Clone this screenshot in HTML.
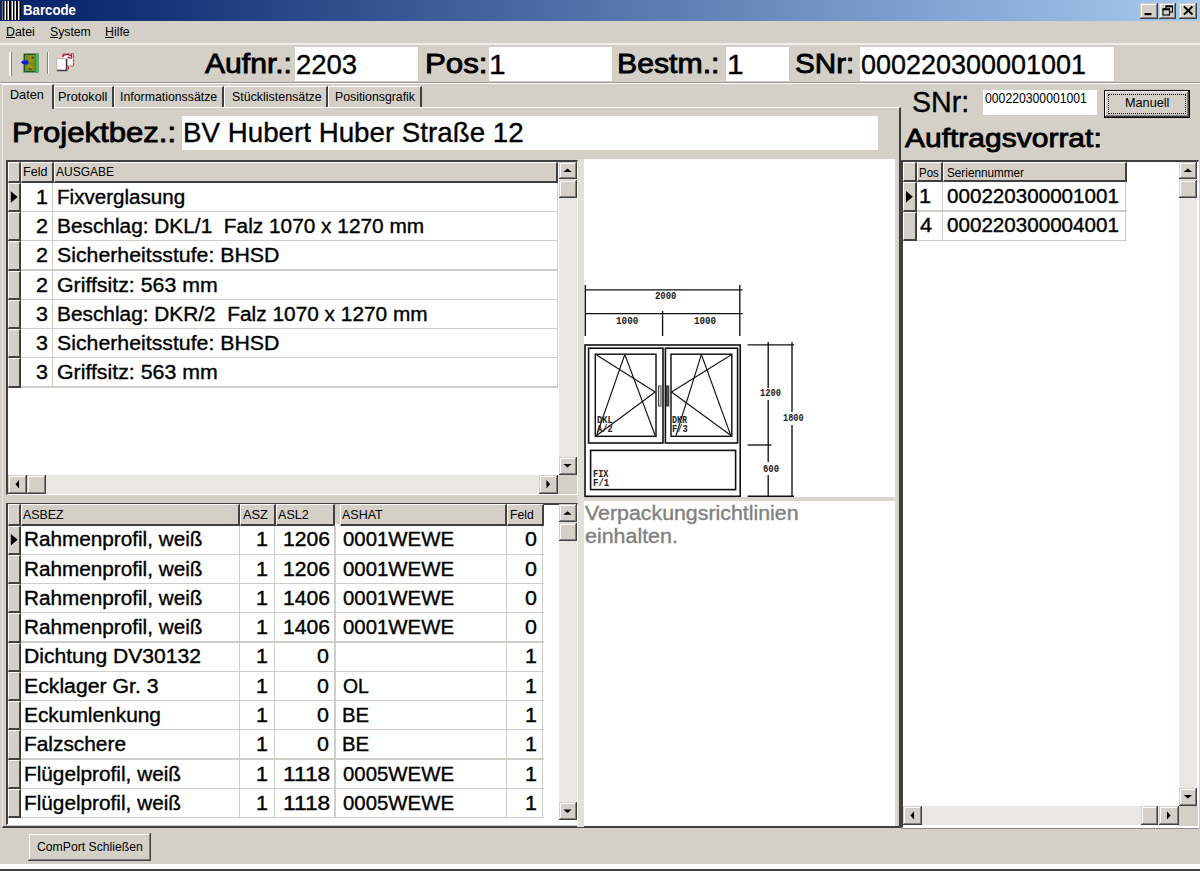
<!DOCTYPE html>
<html><head><meta charset="utf-8"><title>Barcode</title>
<style>
html,body{margin:0;padding:0;}
body{width:1200px;height:871px;overflow:hidden;background:#d4d0c8;position:relative;font-family:"Liberation Sans",sans-serif;color:#000;}
div{position:absolute;box-sizing:border-box;}
svg{position:absolute;overflow:visible;}
.t{position:absolute;white-space:nowrap;line-height:1;transform-origin:0 0;display:block;}
.w{background:#fff;}
.rs{background:#d4d0c8;box-shadow:inset -1px -1px #404040,inset 1px 1px #d4d0c8,inset -2px -2px #808080,inset 2px 2px #fff;}
.tr{background:#e9e7e2;}
.hd{background:#d4d0c8;border-right:2px solid #404040;border-bottom:2px solid #404040;border-top:1px solid #fff;border-left:1px solid #fff;}
.gl{background:#cfcdc8;}
</style></head><body>
<div style="left:0px;top:0px;width:1200px;height:20.5px;background:linear-gradient(90deg,#0a246a 0%,#0c276e 6%,#a6caf0 100%);"></div><svg style="left:2px;top:1px" width="19" height="19" viewBox="0 0 19 19"><rect x="0" y="0" width="19" height="19" fill="#fff"/><rect x="0.5" y="0" width="2" height="19" fill="#000"/><rect x="4" y="0" width="1.5" height="19" fill="#000"/><rect x="7" y="0" width="2.5" height="19" fill="#000"/><rect x="11" y="0" width="1.5" height="19" fill="#000"/><rect x="14" y="0" width="2" height="19" fill="#000"/><rect x="17.5" y="0" width="1.5" height="19" fill="#000"/></svg><span class="t" style="left:23.00px;top:3.52px;font-size:13.8px;transform:scaleX(0.9598);font-weight:bold;color:#fff;">Barcode</span><div class="rs" style="left:1140px;top:2.5px;width:17.5px;height:16px;"></div><div class="rs" style="left:1158.5px;top:2.5px;width:17.5px;height:16px;"></div><div class="rs" style="left:1179px;top:2.5px;width:18px;height:16px;"></div><svg style="left:1140px;top:3px" width="58" height="15" viewBox="0 0 58 15"><rect x="4.5" y="10" width="7" height="2.2" fill="#000"/><rect x="26" y="3" width="6.5" height="6" fill="none" stroke="#000" stroke-width="1.1"/><rect x="25.5" y="2.5" width="7.5" height="1.8" fill="#000"/><rect x="23" y="6" width="6.5" height="6" fill="#d4d0c8" stroke="#000" stroke-width="1.1"/><rect x="22.5" y="5.5" width="7.5" height="1.8" fill="#000"/><path d="M44 3.5 L52.5 11.5 M52.5 3.5 L44 11.5" stroke="#000" stroke-width="1.9" fill="none"/></svg><span class="t" style="left:6.05px;top:25.40px;font-size:13px;transform:scaleX(0.9504);"><u>D</u>atei</span><span class="t" style="left:50.00px;top:25.40px;font-size:13px;transform:scaleX(0.9409);"><u>S</u>ystem</span><span class="t" style="left:104.55px;top:25.40px;font-size:13px;transform:scaleX(0.9485);"><u>H</u>ilfe</span><div style="left:0px;top:43.2px;width:1200px;height:1.8px;background:#efede9;"></div><div style="left:9px;top:52px;width:2.5px;height:24px;background:#fff;border-right:1px solid #808080;"></div><div style="left:46.7px;top:52px;width:2px;height:22px;background:#808080;border-right:1px solid #fff;"></div><svg style="left:20.5px;top:52.5px" width="19" height="20" viewBox="0 0 19 20"><rect x="2.5" y="0.5" width="15" height="19" fill="#1f5a1c"/><rect x="4" y="2" width="10" height="16" fill="#7e8a1e"/><rect x="14.5" y="1" width="2.6" height="18" fill="#35c455"/><path d="M9 3 l3 1 -1 4 -3 2z M6 12 l4 -1 2 4 -5 2z" fill="#9a9420"/><path d="M10.5 5.5 l2 -1.5 M7.5 15.5 l3 1" stroke="#1a3a12" stroke-width="1.2"/><path d="M0 9.2 q2 -2.6 4.5 -1.5 l1.2 -1.2 2.3 3.2 -2.8 2.6 -.9 -1.2 q-2.6 .9 -4.3 -1.9z" fill="#1616d8"/></svg><svg style="left:56px;top:52.5px" width="19" height="19" viewBox="0 0 19 19"><rect x="7" y="1" width="10.5" height="12" fill="#fdf6f6" stroke="#b83a4c" stroke-width="1.2" stroke-dasharray="3 .8"/><path d="M6.5 3.2 q3.5 -3.4 7.8 -.6 l1.2 -1 .2 3.6 -3.6 -.4 1.1 -1" fill="none" stroke="#b01830" stroke-width="1.2"/><rect x="0.8" y="5.8" width="9.4" height="11.6" fill="#fff" stroke="#b8b4ac" stroke-width=".9"/><path d="M1 17.6 h9.6 v-11.5" fill="none" stroke="#3c3c3c" stroke-width="1.5"/><path d="M12.5 14 v2.5" stroke="#b01830" stroke-width="1"/></svg><span class="t" style="left:204.50px;top:51.34px;font-size:27px;transform:scaleX(1.1144);-webkit-text-stroke:0.85px;">Aufnr.:</span><div class="w" style="left:295px;top:47px;width:123px;height:34px;"></div><span class="t" style="left:295.99px;top:51.28px;font-size:27.2px;transform:scaleX(1.0109);-webkit-text-stroke:0.35px;">2203</span><span class="t" style="left:424.68px;top:51.34px;font-size:27px;transform:scaleX(1.1578);-webkit-text-stroke:0.85px;">Pos:</span><div class="w" style="left:488.5px;top:47px;width:123px;height:34px;"></div><span class="t" style="left:489.30px;top:51.28px;font-size:27.2px;transform:scaleX(1.1000);-webkit-text-stroke:0.35px;">1</span><span class="t" style="left:616.76px;top:51.34px;font-size:27px;transform:scaleX(1.1191);-webkit-text-stroke:0.85px;">Bestm.:</span><div class="w" style="left:726px;top:47px;width:62.5px;height:34px;"></div><span class="t" style="left:727.30px;top:51.28px;font-size:27.2px;transform:scaleX(1.1000);-webkit-text-stroke:0.35px;">1</span><span class="t" style="left:794.90px;top:51.34px;font-size:27px;transform:scaleX(1.0971);-webkit-text-stroke:0.85px;">SNr:</span><div class="w" style="left:860px;top:47px;width:254px;height:34px;"></div><span class="t" style="left:861.01px;top:51.28px;font-size:27.2px;transform:scaleX(0.9925);-webkit-text-stroke:0.35px;">000220300001001</span><div style="left:0px;top:82px;width:1200px;height:1px;background:#9a968e;"></div><div style="left:0px;top:83px;width:1200px;height:1px;background:#fff;"></div><span class="t" style="left:911.81px;top:87.95px;font-size:29px;transform:scaleX(0.9865);-webkit-text-stroke:0.35px;">SNr:</span><div class="w" style="left:983px;top:89.5px;width:113.5px;height:25px;"></div><span class="t" style="left:984.50px;top:90.78px;font-size:14.2px;transform:scaleX(0.8610);">000220300001001</span><div style="left:1103.5px;top:89.5px;width:86.5px;height:28.5px;background:#d4d0c8;border:1px solid #000;box-shadow:inset -1px -1px #404040,inset 1px 1px #fff,inset -2px -2px #808080;"></div><div style="left:1108px;top:94px;width:77.5px;height:19.5px;border:1px dotted #000;"></div><span class="t" style="left:1124.53px;top:96.20px;font-size:13px;transform:scaleX(0.9745);">Manuell</span><span class="t" style="left:904.50px;top:124.70px;font-size:26.7px;transform:scaleX(1.1240);-webkit-text-stroke:0.85px;">Auftragsvorrat:</span><div style="left:2px;top:107px;width:898.5px;height:721px;background:#d4d0c8;border-left:1px solid #eceae5;border-top:1px solid #fff;border-right:2px solid #404040;border-bottom:2px solid #404040;"></div><div style="left:53.5px;top:86px;width:60px;height:21px;background:#d4d0c8;border-top:1px solid #fff;border-left:1px solid #fff;border-right:2px solid #404040;"></div><span class="t" style="left:58.02px;top:90.30px;font-size:13px;transform:scaleX(0.9761);">Protokoll</span><div style="left:113.5px;top:86px;width:110px;height:21px;background:#d4d0c8;border-top:1px solid #fff;border-left:1px solid #fff;border-right:2px solid #404040;"></div><span class="t" style="left:120.05px;top:90.30px;font-size:13px;transform:scaleX(0.9470);">Informationssätze</span><div style="left:223.5px;top:86px;width:104.5px;height:21px;background:#d4d0c8;border-top:1px solid #fff;border-left:1px solid #fff;border-right:2px solid #404040;"></div><span class="t" style="left:231.50px;top:90.30px;font-size:13px;transform:scaleX(0.9551);">Stücklistensätze</span><div style="left:328px;top:86px;width:93.5px;height:21px;background:#d4d0c8;border-top:1px solid #fff;border-left:1px solid #fff;border-right:2px solid #404040;"></div><span class="t" style="left:334.55px;top:90.30px;font-size:13px;transform:scaleX(0.9460);">Positionsgrafik</span><div style="left:2px;top:84px;width:52px;height:24.5px;background:#d4d0c8;border-top:1px solid #fff;border-left:1px solid #eceae5;border-right:2px solid #404040;"></div><span class="t" style="left:9.83px;top:88.00px;font-size:13px;transform:scaleX(0.9713);">Daten</span><span class="t" style="left:11.73px;top:119.11px;font-size:27.4px;transform:scaleX(1.1346);-webkit-text-stroke:0.85px;">Projektbez.:</span><div class="w" style="left:182.2px;top:115.5px;width:695.8px;height:34px;"></div><span class="t" style="left:183.19px;top:119.34px;font-size:27.6px;transform:scaleX(1.0050);-webkit-text-stroke:0.35px;">BV Hubert Huber Straße 12</span><div style="left:577px;top:159px;width:7px;height:668px;background:#e2e0db;"></div><div class="w" style="left:584px;top:159px;width:311px;height:338px;"></div><div style="left:584px;top:497px;width:312.5px;height:4px;background:#d9d6d0;"></div><div class="w" style="left:584px;top:501px;width:312.5px;height:325px;"></div><div style="left:895px;top:159px;width:1.5px;height:667px;background:#dedbd6;"></div><span class="t" style="left:584.70px;top:504.41px;font-size:19.6px;transform:scaleX(1.0894);color:#808080;-webkit-text-stroke:0.35px;">Verpackungsrichtlinien</span><span class="t" style="left:584.70px;top:527.41px;font-size:19.6px;transform:scaleX(1.0930);color:#808080;-webkit-text-stroke:0.35px;">einhalten.</span><div class="rs" style="left:27.5px;top:833px;width:123px;height:27.5px;"></div><span class="t" style="left:37.00px;top:840.00px;font-size:13px;transform:scaleX(0.9380);">ComPort Schließen</span><div style="left:0px;top:864px;width:1200px;height:4.5px;background:#fff;"></div><div style="left:0px;top:868.5px;width:1200px;height:2.5px;background:#404040;"></div><div style="left:5.5px;top:160px;width:572px;height:334.5px;background:#fff;border-left:2px solid #404040;border-top:2px solid #404040;border-right:1px solid #fff;border-bottom:1px solid #fff;"></div><div class="hd" style="left:7.5px;top:161.5px;width:13px;height:21.3px;"></div><div class="hd" style="left:20.5px;top:161.5px;width:33px;height:21.3px;"></div><span class="t" style="left:22.84px;top:165.20px;font-size:13px;transform:scaleX(0.9643);">Feld</span><div class="hd" style="left:53.5px;top:161.5px;width:504.5px;height:21.3px;"></div><span class="t" style="left:56.30px;top:165.20px;font-size:13px;transform:scaleX(0.9243);">AUSGABE</span><div class="hd" style="left:7.5px;top:182.8px;width:13px;height:29.25px;"></div><div class="gl" style="left:20.5px;top:210.85px;width:537.5px;height:1.2px;"></div><div class="hd" style="left:7.5px;top:212.05px;width:13px;height:29.25px;"></div><div class="gl" style="left:20.5px;top:240.1px;width:537.5px;height:1.2px;"></div><div class="hd" style="left:7.5px;top:241.3px;width:13px;height:29.25px;"></div><div class="gl" style="left:20.5px;top:269.35px;width:537.5px;height:1.2px;"></div><div class="hd" style="left:7.5px;top:270.55px;width:13px;height:29.25px;"></div><div class="gl" style="left:20.5px;top:298.6px;width:537.5px;height:1.2px;"></div><div class="hd" style="left:7.5px;top:299.8px;width:13px;height:29.25px;"></div><div class="gl" style="left:20.5px;top:327.85px;width:537.5px;height:1.2px;"></div><div class="hd" style="left:7.5px;top:329.05px;width:13px;height:29.25px;"></div><div class="gl" style="left:20.5px;top:357.1px;width:537.5px;height:1.2px;"></div><div class="hd" style="left:7.5px;top:358.3px;width:13px;height:29.25px;"></div><div class="gl" style="left:20.5px;top:386.35px;width:537.5px;height:1.2px;"></div><div class="gl" style="left:52.3px;top:182.8px;width:1.2px;height:204.75px;"></div><div class="gl" style="left:556.8px;top:182.8px;width:1.2px;height:204.75px;"></div><svg style="left:0;top:0" width="1" height="1"><polygon points="10.8,191.125 10.8,202.72500000000002 17.6,196.925" fill="#000"/></svg><div class="tr" style="left:558.5px;top:161.5px;width:18px;height:313px;"></div><div class="rs" style="left:558.5px;top:161.5px;width:18px;height:17.5px;"></div><svg style="left:0;top:0" width="1" height="1"><polygon points="563.36,172.05 571.64,172.05 567.5,168.45" fill="#000"/></svg><div class="rs" style="left:558.5px;top:179.5px;width:18px;height:18.5px;"></div><div class="rs" style="left:558.5px;top:457px;width:18px;height:17.5px;"></div><svg style="left:0;top:0" width="1" height="1"><polygon points="563.36,463.95 571.64,463.95 567.5,467.55" fill="#000"/></svg><div class="tr" style="left:8px;top:475px;width:549.5px;height:18.5px;"></div><div class="rs" style="left:8px;top:475px;width:18.5px;height:18.5px;"></div><svg style="left:0;top:0" width="1" height="1"><polygon points="19.05,480.11 19.05,488.39 15.45,484.25" fill="#000"/></svg><div class="rs" style="left:539px;top:475px;width:18.5px;height:18.5px;"></div><svg style="left:0;top:0" width="1" height="1"><polygon points="546.45,480.11 546.45,488.39 550.05,484.25" fill="#000"/></svg><div class="rs" style="left:27px;top:475px;width:18.5px;height:18.5px;"></div><div style="left:557.5px;top:474.5px;width:19px;height:19px;background:#d4d0c8;"></div><span class="t" style="left:36.30px;top:187.99px;font-size:19.5px;transform:scaleX(1.1000);-webkit-text-stroke:0.35px;">1</span><span class="t" style="left:56.64px;top:187.99px;font-size:19.5px;transform:scaleX(1.0565);-webkit-text-stroke:0.35px;">Fixverglasung</span><span class="t" style="left:36.30px;top:217.24px;font-size:19.5px;transform:scaleX(1.1000);-webkit-text-stroke:0.35px;">2</span><span class="t" style="left:56.63px;top:217.24px;font-size:19.5px;transform:scaleX(1.0687);-webkit-text-stroke:0.35px;">Beschlag: DKL/1  Falz 1070 x 1270 mm</span><span class="t" style="left:36.30px;top:246.49px;font-size:19.5px;transform:scaleX(1.1000);-webkit-text-stroke:0.35px;">2</span><span class="t" style="left:56.70px;top:246.49px;font-size:19.5px;transform:scaleX(1.0915);-webkit-text-stroke:0.35px;">Sicherheitsstufe: BHSD</span><span class="t" style="left:36.30px;top:275.74px;font-size:19.5px;transform:scaleX(1.1000);-webkit-text-stroke:0.35px;">2</span><span class="t" style="left:56.70px;top:275.74px;font-size:19.5px;transform:scaleX(1.0929);-webkit-text-stroke:0.35px;">Griffsitz: 563 mm</span><span class="t" style="left:36.30px;top:304.99px;font-size:19.5px;transform:scaleX(1.1000);-webkit-text-stroke:0.35px;">3</span><span class="t" style="left:56.63px;top:304.99px;font-size:19.5px;transform:scaleX(1.0688);-webkit-text-stroke:0.35px;">Beschlag: DKR/2  Falz 1070 x 1270 mm</span><span class="t" style="left:36.30px;top:334.24px;font-size:19.5px;transform:scaleX(1.1000);-webkit-text-stroke:0.35px;">3</span><span class="t" style="left:56.70px;top:334.24px;font-size:19.5px;transform:scaleX(1.0915);-webkit-text-stroke:0.35px;">Sicherheitsstufe: BHSD</span><span class="t" style="left:36.30px;top:363.49px;font-size:19.5px;transform:scaleX(1.1000);-webkit-text-stroke:0.35px;">3</span><span class="t" style="left:56.70px;top:363.49px;font-size:19.5px;transform:scaleX(1.0929);-webkit-text-stroke:0.35px;">Griffsitz: 563 mm</span><div style="left:5.5px;top:502.5px;width:572px;height:322.7px;background:#fff;border-left:2px solid #404040;border-top:2px solid #404040;border-right:1px solid #fff;border-bottom:1px solid #fff;"></div><div class="hd" style="left:7.5px;top:504px;width:13px;height:21.5px;"></div><div class="hd" style="left:20.5px;top:504px;width:219.5px;height:21.5px;"></div><span class="t" style="left:23.30px;top:507.90px;font-size:13px;transform:scaleX(0.9535);">ASBEZ</span><div class="hd" style="left:240px;top:504px;width:35.5px;height:21.5px;"></div><span class="t" style="left:242.50px;top:507.90px;font-size:13px;transform:scaleX(0.9865);">ASZ</span><div class="hd" style="left:275.5px;top:504px;width:59.5px;height:21.5px;"></div><span class="t" style="left:277.50px;top:507.90px;font-size:13px;transform:scaleX(0.9661);">ASL2</span><div class="hd" style="left:339.5px;top:504px;width:167.5px;height:21.5px;"></div><span class="t" style="left:341.70px;top:507.90px;font-size:13px;transform:scaleX(0.9614);">ASHAT</span><div class="hd" style="left:507px;top:504px;width:36.5px;height:21.5px;"></div><span class="t" style="left:509.76px;top:507.90px;font-size:13px;transform:scaleX(0.9394);">Feld</span><div style="left:335px;top:504px;width:4.5px;height:20px;background:#d4d0c8;"></div><div class="hd" style="left:7.5px;top:525.5px;width:13px;height:29.27px;"></div><div class="gl" style="left:20.5px;top:553.57px;width:523px;height:1.2px;"></div><div class="hd" style="left:7.5px;top:554.77px;width:13px;height:29.27px;"></div><div class="gl" style="left:20.5px;top:582.84px;width:523px;height:1.2px;"></div><div class="hd" style="left:7.5px;top:584.04px;width:13px;height:29.27px;"></div><div class="gl" style="left:20.5px;top:612.11px;width:523px;height:1.2px;"></div><div class="hd" style="left:7.5px;top:613.31px;width:13px;height:29.27px;"></div><div class="gl" style="left:20.5px;top:641.38px;width:523px;height:1.2px;"></div><div class="hd" style="left:7.5px;top:642.58px;width:13px;height:29.27px;"></div><div class="gl" style="left:20.5px;top:670.65px;width:523px;height:1.2px;"></div><div class="hd" style="left:7.5px;top:671.85px;width:13px;height:29.27px;"></div><div class="gl" style="left:20.5px;top:699.92px;width:523px;height:1.2px;"></div><div class="hd" style="left:7.5px;top:701.12px;width:13px;height:29.27px;"></div><div class="gl" style="left:20.5px;top:729.19px;width:523px;height:1.2px;"></div><div class="hd" style="left:7.5px;top:730.39px;width:13px;height:29.27px;"></div><div class="gl" style="left:20.5px;top:758.46px;width:523px;height:1.2px;"></div><div class="hd" style="left:7.5px;top:759.66px;width:13px;height:29.27px;"></div><div class="gl" style="left:20.5px;top:787.73px;width:523px;height:1.2px;"></div><div class="hd" style="left:7.5px;top:788.93px;width:13px;height:29.27px;"></div><div class="gl" style="left:20.5px;top:817px;width:523px;height:1.2px;"></div><div class="gl" style="left:238.8px;top:525.5px;width:1.2px;height:292.7px;"></div><div class="gl" style="left:274.3px;top:525.5px;width:1.2px;height:292.7px;"></div><div class="gl" style="left:333.8px;top:525.5px;width:1.2px;height:292.7px;"></div><div class="gl" style="left:505.8px;top:525.5px;width:1.2px;height:292.7px;"></div><div class="gl" style="left:542.3px;top:525.5px;width:1.2px;height:292.7px;"></div><div class="gl" style="left:334.8px;top:525.5px;width:1.2px;height:292.7px;"></div><svg style="left:0;top:0" width="1" height="1"><polygon points="10.8,533.835 10.8,545.435 17.6,539.635" fill="#000"/></svg><div class="tr" style="left:558.5px;top:504px;width:18px;height:316.3px;"></div><div class="rs" style="left:558.5px;top:504px;width:18px;height:18px;"></div><svg style="left:0;top:0" width="1" height="1"><polygon points="563.36,514.8 571.64,514.8 567.5,511.2" fill="#000"/></svg><div class="rs" style="left:558.5px;top:522.5px;width:18px;height:18.5px;"></div><div class="rs" style="left:558.5px;top:802.3px;width:18px;height:18px;"></div><svg style="left:0;top:0" width="1" height="1"><polygon points="563.36,809.5 571.64,809.5 567.5,813.0999999999999" fill="#000"/></svg><span class="t" style="left:23.94px;top:530.39px;font-size:19.5px;transform:scaleX(1.0625);-webkit-text-stroke:0.35px;">Rahmenprofil, weiß</span><span class="t" style="left:255.70px;top:530.39px;font-size:19.5px;transform:scaleX(1.1000);-webkit-text-stroke:0.35px;">1</span><span class="t" style="left:283.22px;top:530.39px;font-size:19.5px;transform:scaleX(1.0834);-webkit-text-stroke:0.35px;">1206</span><span class="t" style="left:343.00px;top:530.39px;font-size:19.5px;transform:scaleX(1.0452);-webkit-text-stroke:0.35px;">0001WEWE</span><span class="t" style="left:525.40px;top:530.39px;font-size:19.5px;transform:scaleX(1.1000);-webkit-text-stroke:0.35px;">0</span><span class="t" style="left:23.94px;top:559.66px;font-size:19.5px;transform:scaleX(1.0625);-webkit-text-stroke:0.35px;">Rahmenprofil, weiß</span><span class="t" style="left:255.70px;top:559.66px;font-size:19.5px;transform:scaleX(1.1000);-webkit-text-stroke:0.35px;">1</span><span class="t" style="left:283.22px;top:559.66px;font-size:19.5px;transform:scaleX(1.0834);-webkit-text-stroke:0.35px;">1206</span><span class="t" style="left:343.00px;top:559.66px;font-size:19.5px;transform:scaleX(1.0452);-webkit-text-stroke:0.35px;">0001WEWE</span><span class="t" style="left:525.40px;top:559.66px;font-size:19.5px;transform:scaleX(1.1000);-webkit-text-stroke:0.35px;">0</span><span class="t" style="left:23.94px;top:588.93px;font-size:19.5px;transform:scaleX(1.0625);-webkit-text-stroke:0.35px;">Rahmenprofil, weiß</span><span class="t" style="left:255.70px;top:588.93px;font-size:19.5px;transform:scaleX(1.1000);-webkit-text-stroke:0.35px;">1</span><span class="t" style="left:283.22px;top:588.93px;font-size:19.5px;transform:scaleX(1.0834);-webkit-text-stroke:0.35px;">1406</span><span class="t" style="left:343.00px;top:588.93px;font-size:19.5px;transform:scaleX(1.0452);-webkit-text-stroke:0.35px;">0001WEWE</span><span class="t" style="left:525.40px;top:588.93px;font-size:19.5px;transform:scaleX(1.1000);-webkit-text-stroke:0.35px;">0</span><span class="t" style="left:23.94px;top:618.20px;font-size:19.5px;transform:scaleX(1.0625);-webkit-text-stroke:0.35px;">Rahmenprofil, weiß</span><span class="t" style="left:255.70px;top:618.20px;font-size:19.5px;transform:scaleX(1.1000);-webkit-text-stroke:0.35px;">1</span><span class="t" style="left:283.22px;top:618.20px;font-size:19.5px;transform:scaleX(1.0834);-webkit-text-stroke:0.35px;">1406</span><span class="t" style="left:343.00px;top:618.20px;font-size:19.5px;transform:scaleX(1.0452);-webkit-text-stroke:0.35px;">0001WEWE</span><span class="t" style="left:525.40px;top:618.20px;font-size:19.5px;transform:scaleX(1.1000);-webkit-text-stroke:0.35px;">0</span><span class="t" style="left:23.92px;top:647.47px;font-size:19.5px;transform:scaleX(1.0813);-webkit-text-stroke:0.35px;">Dichtung DV30132</span><span class="t" style="left:255.70px;top:647.47px;font-size:19.5px;transform:scaleX(1.1000);-webkit-text-stroke:0.35px;">1</span><span class="t" style="left:317.20px;top:647.47px;font-size:19.5px;transform:scaleX(1.1000);-webkit-text-stroke:0.35px;">0</span><span class="t" style="left:524.70px;top:647.47px;font-size:19.5px;transform:scaleX(1.1000);-webkit-text-stroke:0.35px;">1</span><span class="t" style="left:23.91px;top:676.74px;font-size:19.5px;transform:scaleX(1.0887);-webkit-text-stroke:0.35px;">Ecklager Gr. 3</span><span class="t" style="left:255.70px;top:676.74px;font-size:19.5px;transform:scaleX(1.1000);-webkit-text-stroke:0.35px;">1</span><span class="t" style="left:317.20px;top:676.74px;font-size:19.5px;transform:scaleX(1.1000);-webkit-text-stroke:0.35px;">0</span><span class="t" style="left:343.00px;top:676.74px;font-size:19.5px;transform:scaleX(0.9936);-webkit-text-stroke:0.35px;">OL</span><span class="t" style="left:524.70px;top:676.74px;font-size:19.5px;transform:scaleX(1.1000);-webkit-text-stroke:0.35px;">1</span><span class="t" style="left:23.93px;top:706.01px;font-size:19.5px;transform:scaleX(1.0709);-webkit-text-stroke:0.35px;">Eckumlenkung</span><span class="t" style="left:255.70px;top:706.01px;font-size:19.5px;transform:scaleX(1.1000);-webkit-text-stroke:0.35px;">1</span><span class="t" style="left:317.20px;top:706.01px;font-size:19.5px;transform:scaleX(1.1000);-webkit-text-stroke:0.35px;">0</span><span class="t" style="left:341.96px;top:706.01px;font-size:19.5px;transform:scaleX(1.0397);-webkit-text-stroke:0.35px;">BE</span><span class="t" style="left:524.70px;top:706.01px;font-size:19.5px;transform:scaleX(1.1000);-webkit-text-stroke:0.35px;">1</span><span class="t" style="left:23.93px;top:735.28px;font-size:19.5px;transform:scaleX(1.0693);-webkit-text-stroke:0.35px;">Falzschere</span><span class="t" style="left:255.70px;top:735.28px;font-size:19.5px;transform:scaleX(1.1000);-webkit-text-stroke:0.35px;">1</span><span class="t" style="left:317.20px;top:735.28px;font-size:19.5px;transform:scaleX(1.1000);-webkit-text-stroke:0.35px;">0</span><span class="t" style="left:341.96px;top:735.28px;font-size:19.5px;transform:scaleX(1.0397);-webkit-text-stroke:0.35px;">BE</span><span class="t" style="left:524.70px;top:735.28px;font-size:19.5px;transform:scaleX(1.1000);-webkit-text-stroke:0.35px;">1</span><span class="t" style="left:23.93px;top:764.55px;font-size:19.5px;transform:scaleX(1.0651);-webkit-text-stroke:0.35px;">Flügelprofil, weiß</span><span class="t" style="left:255.70px;top:764.55px;font-size:19.5px;transform:scaleX(1.1000);-webkit-text-stroke:0.35px;">1</span><span class="t" style="left:283.14px;top:764.55px;font-size:19.5px;transform:scaleX(1.1646);-webkit-text-stroke:0.35px;">1118</span><span class="t" style="left:343.00px;top:764.55px;font-size:19.5px;transform:scaleX(1.0452);-webkit-text-stroke:0.35px;">0005WEWE</span><span class="t" style="left:524.70px;top:764.55px;font-size:19.5px;transform:scaleX(1.1000);-webkit-text-stroke:0.35px;">1</span><span class="t" style="left:23.93px;top:793.82px;font-size:19.5px;transform:scaleX(1.0651);-webkit-text-stroke:0.35px;">Flügelprofil, weiß</span><span class="t" style="left:255.70px;top:793.82px;font-size:19.5px;transform:scaleX(1.1000);-webkit-text-stroke:0.35px;">1</span><span class="t" style="left:283.14px;top:793.82px;font-size:19.5px;transform:scaleX(1.1646);-webkit-text-stroke:0.35px;">1118</span><span class="t" style="left:343.00px;top:793.82px;font-size:19.5px;transform:scaleX(1.0452);-webkit-text-stroke:0.35px;">0005WEWE</span><span class="t" style="left:524.70px;top:793.82px;font-size:19.5px;transform:scaleX(1.1000);-webkit-text-stroke:0.35px;">1</span><div style="left:900.5px;top:160px;width:298px;height:667.6px;background:#fff;border-left:2px solid #404040;border-top:2px solid #404040;border-right:1px solid #fff;border-bottom:1px solid #fff;"></div><div class="hd" style="left:902.5px;top:161.5px;width:14px;height:20.9px;"></div><div class="hd" style="left:916.5px;top:161.5px;width:26.5px;height:20.9px;"></div><span class="t" style="left:918.82px;top:165.90px;font-size:13px;transform:scaleX(0.8812);">Pos</span><div class="hd" style="left:943px;top:161.5px;width:183.5px;height:20.9px;"></div><span class="t" style="left:946.80px;top:165.90px;font-size:13px;transform:scaleX(0.9031);">Seriennummer</span><div class="hd" style="left:902.5px;top:182.4px;width:14px;height:29.2px;"></div><div class="gl" style="left:916.5px;top:210.4px;width:210px;height:1.2px;"></div><div class="hd" style="left:902.5px;top:211.6px;width:14px;height:29.2px;"></div><div class="gl" style="left:916.5px;top:239.6px;width:210px;height:1.2px;"></div><div class="gl" style="left:941.8px;top:182.4px;width:1.2px;height:58.4px;"></div><div class="gl" style="left:1125.3px;top:182.4px;width:1.2px;height:58.4px;"></div><svg style="left:0;top:0" width="1" height="1"><polygon points="906,191 906,202.6 912.8,196.8" fill="#000"/></svg><span class="t" style="left:919.40px;top:186.84px;font-size:19.8px;transform:scaleX(1.1000);-webkit-text-stroke:0.35px;">1</span><span class="t" style="left:946.80px;top:186.84px;font-size:19.8px;transform:scaleX(1.0417);-webkit-text-stroke:0.35px;">000220300001001</span><span class="t" style="left:920.00px;top:216.04px;font-size:19.8px;transform:scaleX(1.1000);-webkit-text-stroke:0.35px;">4</span><span class="t" style="left:946.80px;top:216.04px;font-size:19.8px;transform:scaleX(1.0417);-webkit-text-stroke:0.35px;">000220300004001</span><div style="left:900.5px;top:827.6px;width:298px;height:1.4px;background:#8c8a86;"></div><div class="tr" style="left:1178.8px;top:161.5px;width:18.2px;height:644px;"></div><div class="rs" style="left:1178.8px;top:161.5px;width:18.2px;height:17.5px;"></div><svg style="left:0;top:0" width="1" height="1"><polygon points="1183.76,172.05 1192.0400000000002,172.05 1187.9,168.45" fill="#000"/></svg><div class="rs" style="left:1178.8px;top:179.5px;width:18.2px;height:18.5px;"></div><div class="rs" style="left:1178.8px;top:788px;width:18.2px;height:17.5px;"></div><svg style="left:0;top:0" width="1" height="1"><polygon points="1183.76,794.95 1192.0400000000002,794.95 1187.9,798.55" fill="#000"/></svg><div class="tr" style="left:902.5px;top:806px;width:276px;height:18.8px;"></div><div class="rs" style="left:902.5px;top:806px;width:19.5px;height:18.8px;"></div><svg style="left:0;top:0" width="1" height="1"><polygon points="914.05,811.26 914.05,819.54 910.45,815.4" fill="#000"/></svg><div class="rs" style="left:1159px;top:806px;width:19.5px;height:18.8px;"></div><svg style="left:0;top:0" width="1" height="1"><polygon points="1166.95,811.26 1166.95,819.54 1170.55,815.4" fill="#000"/></svg><div class="rs" style="left:1141.2px;top:806px;width:17.3px;height:18.8px;"></div><div style="left:1178.5px;top:805.5px;width:19px;height:20px;background:#d4d0c8;"></div><svg style="left:0;top:0" width="1" height="1"><line x1="585" y1="289.8" x2="742.5" y2="289.8" stroke="#111" stroke-width="1.35"/><line x1="585" y1="313.6" x2="742.5" y2="313.6" stroke="#111" stroke-width="1.35"/><line x1="585.3" y1="285" x2="585.3" y2="336" stroke="#111" stroke-width="1.35"/><line x1="739.8" y1="285" x2="739.8" y2="336" stroke="#111" stroke-width="1.35"/><line x1="662.6" y1="311" x2="662.6" y2="336" stroke="#111" stroke-width="1.35"/><rect x="585" y="345" width="155.2" height="151.3" fill="none" stroke="#111" stroke-width="1.6"/><rect x="588.6" y="348.2" width="74.4" height="94.8" fill="none" stroke="#111" stroke-width="1.6"/><rect x="665.4" y="348.2" width="72.2" height="94.8" fill="none" stroke="#111" stroke-width="1.6"/><rect x="595.3" y="354.2" width="60.7" height="82.1" fill="none" stroke="#111" stroke-width="1.45"/><rect x="671" y="354.2" width="60.8" height="82.1" fill="none" stroke="#111" stroke-width="1.45"/><rect x="590.6" y="450.4" width="145" height="39.2" fill="none" stroke="#111" stroke-width="1.6"/><line x1="624.8" y1="354.5" x2="596.6" y2="435.5" stroke="#111" stroke-width="1.1"/><line x1="624.8" y1="354.5" x2="655.2" y2="435.5" stroke="#111" stroke-width="1.1"/><line x1="596.6" y1="355" x2="655.2" y2="392" stroke="#111" stroke-width="1.1"/><line x1="596.6" y1="435.5" x2="655.2" y2="392" stroke="#111" stroke-width="1.1"/><line x1="701.4" y1="354.5" x2="676" y2="435.5" stroke="#111" stroke-width="1.1"/><line x1="701.4" y1="354.5" x2="730.8" y2="435.5" stroke="#111" stroke-width="1.1"/><line x1="731" y1="355" x2="671.5" y2="392" stroke="#111" stroke-width="1.1"/><line x1="731" y1="435.5" x2="671.5" y2="392" stroke="#111" stroke-width="1.1"/><rect x="658.5" y="386" width="2.5" height="20" fill="#ddd" stroke="#333" stroke-width="0.9"/><rect x="666.2" y="386" width="2.6" height="20" fill="#555" stroke="#222" stroke-width="0.9"/><line x1="768.2" y1="342" x2="768.2" y2="388" stroke="#111" stroke-width="1.35"/><line x1="768.2" y1="400" x2="768.2" y2="462" stroke="#111" stroke-width="1.35"/><line x1="768.2" y1="475" x2="768.2" y2="496.5" stroke="#111" stroke-width="1.35"/><line x1="792" y1="342" x2="792" y2="412" stroke="#111" stroke-width="1.35"/><line x1="792" y1="425" x2="792" y2="496.5" stroke="#111" stroke-width="1.35"/><line x1="747.6" y1="344.8" x2="794" y2="344.8" stroke="#111" stroke-width="1.35"/><line x1="747.6" y1="445" x2="771.5" y2="445" stroke="#111" stroke-width="1.35"/><line x1="747.6" y1="496.2" x2="794" y2="496.2" stroke="#111" stroke-width="1.35"/></svg><span class="t" style="left:655.20px;top:290.81px;font-size:10.5px;transform:scaleX(0.8473);font-weight:bold;color:#222;font-family:'Liberation Mono',monospace;">2000</span><span class="t" style="left:616.00px;top:315.61px;font-size:10.5px;transform:scaleX(0.8834);font-weight:bold;color:#222;font-family:'Liberation Mono',monospace;">1000</span><span class="t" style="left:693.50px;top:315.61px;font-size:10.5px;transform:scaleX(0.8794);font-weight:bold;color:#222;font-family:'Liberation Mono',monospace;">1000</span><span class="t" style="left:760.00px;top:387.81px;font-size:10.5px;transform:scaleX(0.8272);font-weight:bold;color:#222;font-family:'Liberation Mono',monospace;">1200</span><span class="t" style="left:783.30px;top:412.91px;font-size:10.5px;transform:scaleX(0.8152);font-weight:bold;color:#222;font-family:'Liberation Mono',monospace;">1800</span><span class="t" style="left:763.00px;top:464.01px;font-size:10.5px;transform:scaleX(0.8494);font-weight:bold;color:#222;font-family:'Liberation Mono',monospace;">600</span><span class="t" style="left:596.60px;top:415.41px;font-size:10.5px;transform:scaleX(0.8279);font-weight:bold;color:#222;font-family:'Liberation Mono',monospace;">DKL</span><span class="t" style="left:596.60px;top:424.11px;font-size:10.5px;transform:scaleX(0.8279);font-weight:bold;color:#222;font-family:'Liberation Mono',monospace;">A/2</span><span class="t" style="left:671.50px;top:415.41px;font-size:10.5px;transform:scaleX(0.7907);font-weight:bold;color:#222;font-family:'Liberation Mono',monospace;">DKR</span><span class="t" style="left:671.50px;top:424.11px;font-size:10.5px;transform:scaleX(0.8332);font-weight:bold;color:#222;font-family:'Liberation Mono',monospace;">F/3</span><span class="t" style="left:593.00px;top:468.61px;font-size:10.5px;transform:scaleX(0.8162);font-weight:bold;color:#222;font-family:'Liberation Mono',monospace;">FIX</span><span class="t" style="left:593.00px;top:478.11px;font-size:10.5px;transform:scaleX(0.8601);font-weight:bold;color:#222;font-family:'Liberation Mono',monospace;">F/1</span>
</body></html>
